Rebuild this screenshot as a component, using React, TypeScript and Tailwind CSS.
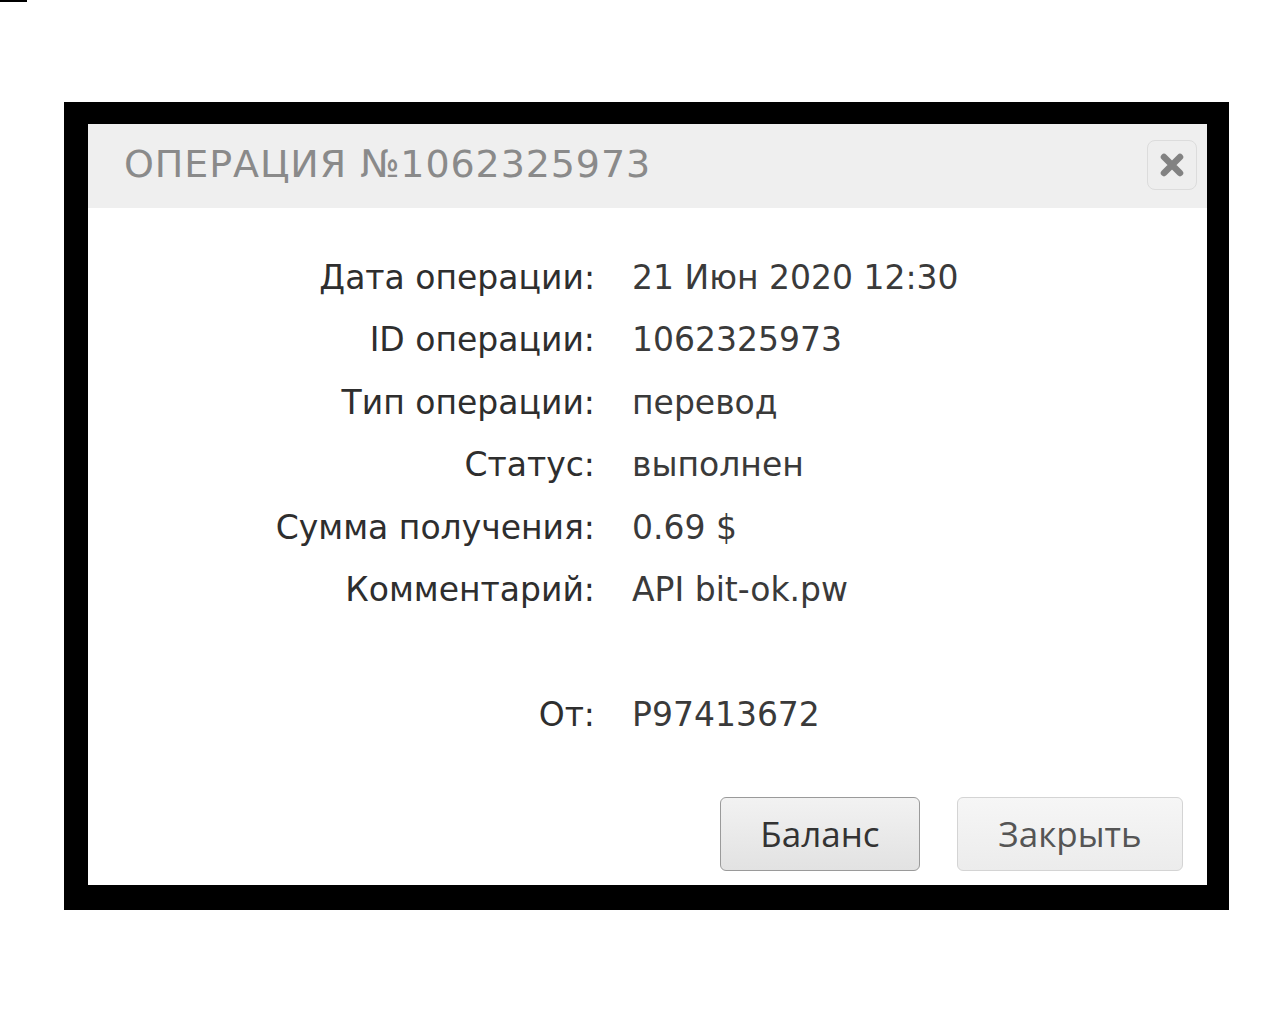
import React from "react"

// строки карточки операции
const ROWS: { label: string; value: string }[] = [
  { label: "Дата операции:", value: "21 Июн 2020 12:30" },
  { label: "ID операции:", value: "1062325973" },
  { label: "Тип операции:", value: "перевод" },
  { label: "Статус:", value: "выполнен" },
  { label: "Сумма получения:", value: "0.69 $" },
  { label: "Комментарий:", value: "API bit-ok.pw" },
  { label: "", value: "" },
  { label: "От:", value: "P97413672" },
]

export default function App() {
  return (
    <div className="min-h-[1024px] w-[1280px] bg-white">
      <div className="h-[2px] w-[27px] bg-black" />
      <div className="ml-[64px] mt-[100px] w-[1165px] bg-black pb-[25px] pl-[24px] pr-[22px] pt-[22px]">
        <div className="flex h-[761px] flex-col bg-white">
          {/* заголовок */}
          <div className="flex h-[84px] items-center justify-between bg-[#efefef] pl-[36px] pr-[10px]">
            <h1
              className="-mt-[4px] text-[38px] leading-none tracking-[0.9px] text-[#8a8a8a]"
              style={{ fontFamily: '"DejaVu Sans", sans-serif' }}
            >
              ОПЕРАЦИЯ №1062325973
            </h1>
            <button className="-mt-[2px] flex size-[50px] items-center justify-center rounded-lg border border-[#dcdcdc] bg-[#eeeeee]">
              <svg width="26" height="26" viewBox="0 0 26 26">
                <path d="M5 5 L21 21 M21 5 L5 21" stroke="#828282" strokeWidth="6.5" strokeLinecap="round" />
              </svg>
            </button>
          </div>

          {/* данные */}
          <div
            className="grid grid-cols-[507px_1fr] gap-x-[37px] pt-[38px] text-[33px]"
            style={{ fontFamily: '"DejaVu Sans", sans-serif' }}
          >
            {ROWS.map((row, i) => (
              <React.Fragment key={i}>
                <div className="flex h-[62.5px] items-center justify-end text-[#2e2e2e]">{row.label}</div>
                <div className="flex h-[62.5px] items-center text-[#3a3a3a]">{row.value}</div>
              </React.Fragment>
            ))}
          </div>

          {/* кнопки */}
          <div
            className="mt-auto flex justify-end gap-[37px] pb-[14px] pr-[24px]"
            style={{ fontFamily: '"Open Sans", sans-serif' }}
          >
            <button className="h-[74px] w-[200px] rounded-md border border-[#9a9a9a] bg-gradient-to-b from-[#f2f2f2] to-[#e2e2e2] text-[35px] text-[#333]">
              Баланс
            </button>
            <button className="h-[74px] w-[226px] rounded-md border border-[#d4d4d4] bg-gradient-to-b from-[#f6f6f6] to-[#ececec] text-[35px] text-[#555]">
              Закрыть
            </button>
          </div>
        </div>
      </div>
    </div>
  )
}
